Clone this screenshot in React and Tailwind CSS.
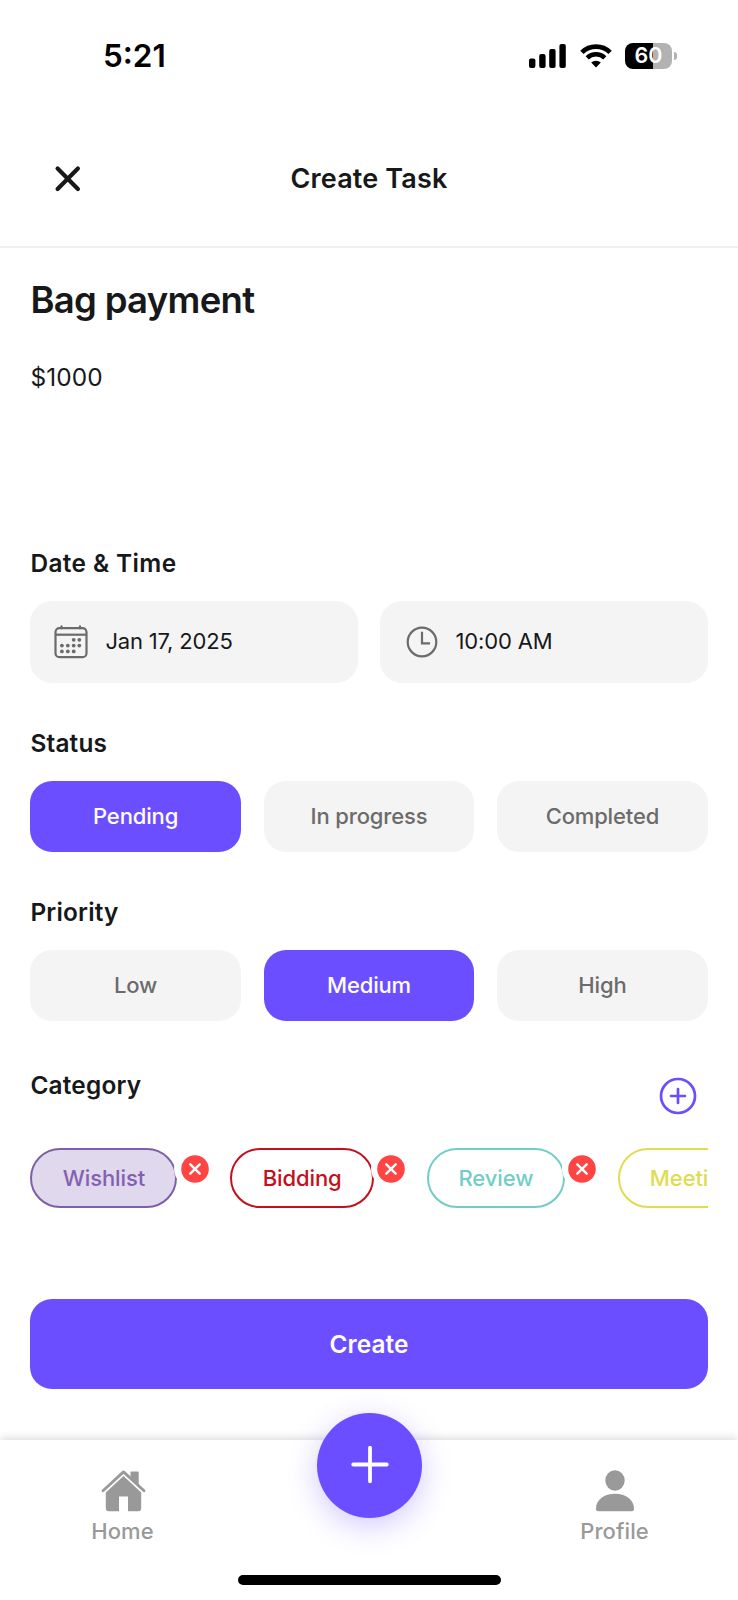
import React from "react";

function StatusBar() {
  return (
    <div className="flex h-[111px] items-center justify-between pl-[103px] pr-[61.5px]">
      <div className="text-[31.5px] font-semibold leading-none text-black">5:21</div>
      <div className="flex items-center">
        <svg width="37" height="24" viewBox="0 0 37 24" fill="#000">
          <rect x="0" y="14.5" width="6.4" height="9.5" rx="2" />
          <rect x="10.2" y="10" width="6.4" height="14" rx="2" />
          <rect x="20.2" y="5" width="6.4" height="19" rx="2" />
          <rect x="30.4" y="0" width="6.4" height="24" rx="2" />
        </svg>
        <svg className="ml-[14px]" width="32" height="24" viewBox="0 0 32 24" fill="none" stroke="#000">
          <path d="M1.9 8.4a20.2 20.2 0 0 1 28.2 0" strokeWidth="4.8" />
          <path d="M7.2 13.9a12.6 12.6 0 0 1 17.6 0" strokeWidth="4.4" />
          <path d="M16 23.5l-4.8-4.9a6.9 6.9 0 0 1 9.6 0z" fill="#000" stroke="none" />
        </svg>
        <div className="ml-[13px] flex h-[26px] w-[47px] items-center justify-center rounded-[8px] bg-[linear-gradient(90deg,#000_60%,#b2b2b2_60%)] text-[21.5px] font-semibold leading-none text-white">
          60
        </div>
        <div className="ml-[1.5px] h-[8px] w-[3px] rounded-r-full bg-[#b2b2b2]" />
      </div>
    </div>
  );
}

function Header() {
  return (
    <header className="flex h-[137px] items-center justify-between border-b-2 border-[#f0f0f0] px-[54px]">
      <svg width="28" height="28" viewBox="0 0 28 28" fill="none" stroke="#17181a" strokeWidth="4.2" strokeLinecap="round">
        <path d="M3.6 3.6l20.300 20.300M23.900 3.6l-20.300 20.300" />
      </svg>
      <h1 className="text-[27px] font-semibold leading-none tracking-[0.15px]">Create Task</h1>
      <div className="w-[28px]" />
    </header>
  );
}

function Label({ children, className = "tracking-[0.2px]" }) {
  return <h2 className={"h-[30px] text-[24.4px] font-semibold leading-[30px] " + className}>{children}</h2>;
}

function Options({ items, active }) {
  return (
    <div className="grid h-[71px] grid-cols-3 gap-[23px]">
      {items.map((item) => (
        <button
          key={item}
          className={
            "flex items-center justify-center rounded-[22px] text-[22px] font-medium tracking-[-0.15px] " +
            (item === active ? "bg-[#6b4eff] text-white" : "bg-[#f4f4f4] text-[#6b6b6b]")
          }
        >
          {item}
        </button>
      ))}
    </div>
  );
}

function CalendarIcon() {
  const dots = [
    [19.7, 14.8], [25.3, 14.8],
    [7.9, 20.6], [13.8, 20.6], [19.7, 20.6], [25.3, 20.6],
    [7.9, 26.4], [13.8, 26.4], [19.7, 26.4],
  ];
  return (
    <svg width="34" height="34" viewBox="0 0 34 34" fill="none" stroke="#6b6b6b" strokeWidth="2.2">
      <rect x="1.5" y="3.2" width="31" height="29" rx="4" />
      <path d="M1.5 9.7h31" />
      <path d="M7.5 1.3v2M26 1.3v2" strokeLinecap="round" />
      {dots.map(([x, y]) => (
        <circle key={x + "-" + y} cx={x} cy={y} r="1.9" fill="#6b6b6b" stroke="none" />
      ))}
    </svg>
  );
}

function ClockIcon() {
  return (
    <svg width="32" height="32" viewBox="0 0 32 32" fill="none" stroke="#6b6b6b" strokeWidth="2.2">
      <circle cx="16" cy="16" r="14.3" />
      <path d="M16 5.8v11.500h8" />
    </svg>
  );
}

function Chip({ label, className, removable = true }) {
  return (
    <div className={"relative flex h-[60px] shrink-0 items-center justify-center rounded-full border-2 text-[22px] font-medium tracking-[-0.1px] " + className}>
      {label}
      {removable && (
        <span className="absolute right-[-40px] top-[-2px] flex h-[41px] w-[41px] items-center justify-center rounded-full bg-white">
          <svg width="28" height="28" viewBox="0 0 28 28">
            <circle cx="14" cy="14" r="13.8" fill="#ff4444" />
            <path d="M9.3 9.3l9.4 9.4M18.7 9.3l-9.4 9.4" stroke="#fff" strokeWidth="2.4" strokeLinecap="round" />
          </svg>
        </span>
      )}
    </div>
  );
}

export default function App() {
  return (
    <div className="flex h-[1600px] w-[738px] flex-col overflow-hidden bg-white font-['Inter',sans-serif] text-[#17181a]">
      <StatusBar />
      <Header />
      <main className="flex h-[1192px] flex-col px-[30.4px]">
        <div className="mt-[30px] h-[44px] text-[36.5px] font-semibold leading-[44px] tracking-[-0.7px]">Bag payment</div>
        <div className="mt-[40px] h-[30px] text-[24.4px] leading-[30px] tracking-[0.1px]">$1000</div>
        <div className="mt-[156px]"><Label className="tracking-[0.4px]">Date &amp; Time</Label></div>
        <div className="mt-[22.5px] grid h-[82.5px] grid-cols-2 gap-[22.5px] text-[22px] tracking-[-0.17px]">
          <div className="flex items-center rounded-[22px] bg-[#f4f4f4] pl-[24px]">
            <CalendarIcon />
            <span className="ml-[17px]">Jan 17, 2025</span>
          </div>
          <div className="flex items-center rounded-[22px] bg-[#f4f4f4] pl-[25.8px]">
            <ClockIcon />
            <span className="ml-[17.5px]">10:00 AM</span>
          </div>
        </div>
        <div className="mt-[45px]"><Label>Status</Label></div>
        <div className="mt-[23px]"><Options items={["Pending", "In progress", "Completed"]} active="Pending" /></div>
        <div className="mt-[45px]"><Label>Priority</Label></div>
        <div className="mt-[23px]"><Options items={["Low", "Medium", "High"]} active="Medium" /></div>
        <div className="mt-[49px] flex h-[60px] justify-between">
          <Label>Category</Label>
          <svg className="mr-[11px] mt-[7px]" width="38" height="38" viewBox="0 0 38 38" fill="none" stroke="#6b4eff" strokeWidth="2.7">
            <circle cx="19" cy="19" r="17" />
            <path d="M12 19h14M19 12v14" strokeLinecap="round" />
          </svg>
        </div>
        <div className="mt-[18.4px] flex gap-[53px] overflow-hidden">
          <Chip label="Wishlist" className="w-[147px] border-[#7f5fa8] bg-[#e0d8ec] text-[#8460b0]" />
          <Chip label="Bidding" className="w-[143.5px] border-[#c4101c] text-[#c4101c]" />
          <Chip label="Review" className="w-[138px] border-[#72cdc8] text-[#72cdc8]" />
          <Chip label="Meeting" removable={false} className="w-[149px] border-[#e0dc50] text-[#e0dc50]" />
        </div>
        <button className="mt-[90.6px] h-[90px] shrink-0 rounded-[22px] bg-[#6b4eff] text-[24.4px] font-semibold tracking-[0.1px] text-white">Create</button>
      </main>
      <nav className="relative flex h-[160px] justify-between bg-white pl-[59.5px] pr-[60.5px] text-[22px] font-medium tracking-[0.1px] text-[#999999] shadow-[0_-2px_8px_rgba(0,0,0,0.14)]">
        <div className="flex w-[126px] flex-col items-center pt-[29.5px]">
          <svg className="ml-[1.5px]" width="45" height="42" viewBox="0 0 44 42" fill="#999">
            <path d="M29 2.2a.8.8 0 0 1 .8-.8h6.600a.8.8 0 0 1 .8.8v13.500l-8.200-7.500z" />
            <path d="M1.5 20.700L22 1.900 42.500 20.700" fill="none" stroke="#999" strokeWidth="2.800" strokeLinecap="round" strokeLinejoin="round" />
            <path d="M22 6.100L39.700 22.400V38.200a3 3 0 0 1-3 3H26.500V26.500H17.500V41.200H7.300a3 3 0 0 1-3-3V22.400z" />
          </svg>
          <span className="mt-[6.5px] leading-[27px]">Home</span>
        </div>
        <div className="flex w-[126px] flex-col items-center pt-[29.5px]">
          <svg width="40" height="42" viewBox="0 0 40 42" fill="#999">
            <ellipse cx="20" cy="10.5" rx="9.7" ry="10.2" />
            <path d="M1 38.500C1 29.500 9.500 23.700 20 23.700S39 29.500 39 38.500A2.500 2.500 0 0 1 36.500 41.200H3.500A2.500 2.500 0 0 1 1 38.500z" />
          </svg>
          <span className="mt-[6.5px] leading-[27px]">Profile</span>
        </div>
        <button className="absolute left-[316.5px] top-[-27px] flex h-[105px] w-[105px] items-center justify-center rounded-full bg-[#6b4eff] shadow-[0_8px_30px_rgba(107,78,255,0.3)]">
          <svg width="40" height="40" viewBox="0 0 40 40" stroke="#fff" strokeWidth="3.8" strokeLinecap="round">
            <path d="M4.2 18.500h33.600M21 1.700v33.600" />
          </svg>
        </button>
        <div className="absolute bottom-[15px] left-[238px] h-[10px] w-[263px] rounded-full bg-black" />
      </nav>
    </div>
  );
}
